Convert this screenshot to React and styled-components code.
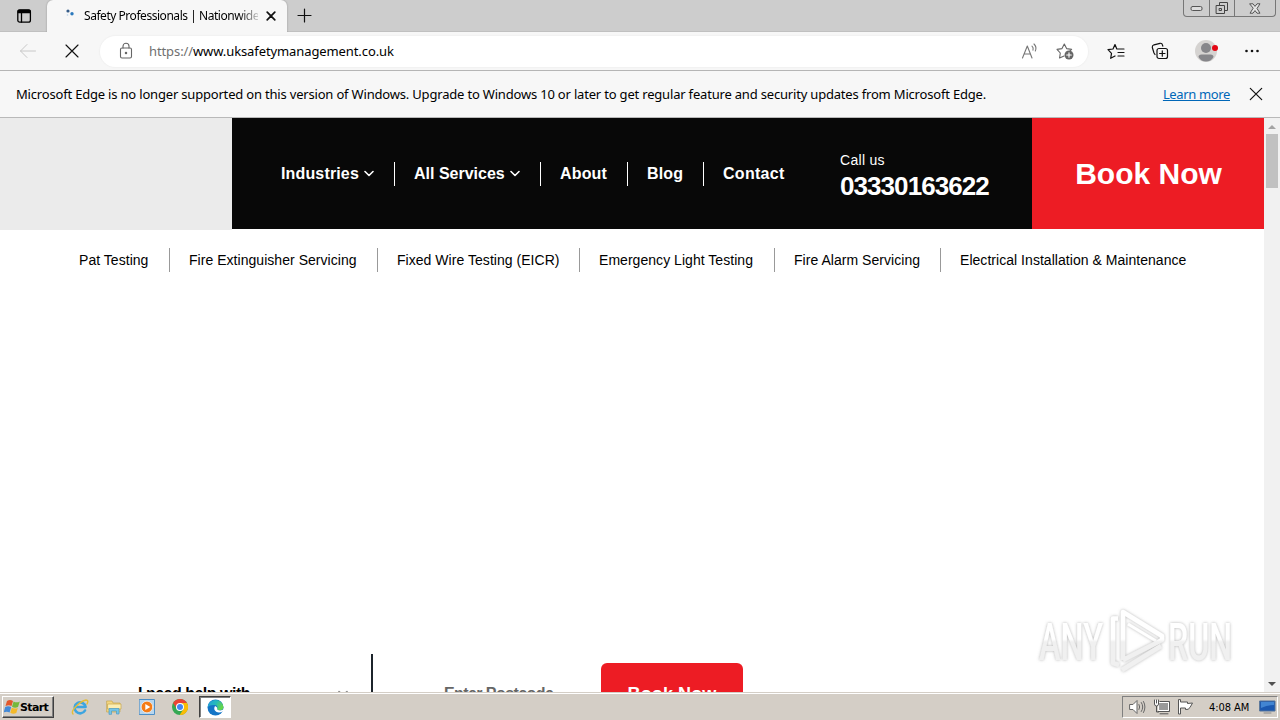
import React from 'react';
import styled, { createGlobalStyle } from 'styled-components';

const GlobalStyle = createGlobalStyle`
  * {
    box-sizing: border-box;
  }

  body {
    margin: 0;
    background: #fff;
    overflow: hidden;
  }

  svg {
    display: block;
    flex: none;
  }
`;

const Screen = styled.div`
  width: 1280px;
  height: 720px;
  display: flex;
  flex-direction: column;
  overflow: hidden;
  font-family: 'Noto Sans', 'Open Sans', sans-serif;
  color: #000;
`;

const TabStrip = styled.div`
  height: 32px;
  flex: none;
  display: flex;
  background: #cdcdcd;
  border-bottom: 1px solid #c0c0c0;
`;

const TabActions = styled.div`
  width: 47px;
  padding: 8px 0 0 16px;
`;

const Tab = styled.div`
  width: 240px;
  height: 32px;
  display: flex;
  align-items: center;
  padding-left: 16px;
  background: #f7f7f7;
  border-radius: 6px 6px 0 0;
  box-shadow: 0 0 2px rgba(0, 0, 0, 0.3);
  clip-path: inset(0 -3px 0 -3px);
`;

const TabTitle = styled.span`
  width: 174px;
  margin-left: 5px;
  overflow: hidden;
  white-space: nowrap;
  font-size: 12px;
  line-height: 20px;
  letter-spacing: -0.46px;
  mask-image: linear-gradient(90deg, #000 155px, transparent 178px);
`;

const TabClose = styled.div`
  margin-left: 8px;
`;

const NewTab = styled.div`
  padding: 8px 0 0 10px;
`;

const WindowControls = styled.div`
  display: flex;
  width: 93px;
  height: 17px;
  margin: 0 4px 0 auto;
  border: 1px solid #777;
  border-top: 0;
  border-radius: 0 0 4px 4px;
`;

const WindowButton = styled.div`
  width: ${({ $width }) => $width}px;
  display: flex;
  align-items: center;
  justify-content: center;
  border-left: ${({ $first }) => ($first ? 0 : '1px solid #777')};
`;

const Toolbar = styled.div`
  height: 39px;
  flex: none;
  display: flex;
  align-items: center;
  padding-left: 19px;
  background: #f7f7f7;
  border-bottom: 1px solid #b5b5b5;
`;

const ToolIcon = styled.div`
  margin-left: ${({ $gap }) => $gap || 0}px;
`;

const AddressBar = styled.div`
  width: 988px;
  height: 31px;
  margin-left: 21px;
  padding-left: 18px;
  display: flex;
  align-items: center;
  background: #fff;
  border-radius: 16px;
  box-shadow: 0 0 1px 1px #f1f1f1;
`;

const Url = styled.span`
  width: 260px;
  margin-left: 15px;
  font-size: 13px;
  letter-spacing: -0.1px;
  white-space: nowrap;
`;

const Scheme = styled.span`
  color: #707070;
`;

const InfoBar = styled.div`
  height: 47px;
  flex: none;
  display: flex;
  align-items: center;
  padding: 0 17px 1px 16px;
  background: #f7f7f7;
  border-bottom: 1px solid #b9b9b9;
  font-size: 13px;
  letter-spacing: -0.187px;
  white-space: nowrap;
`;

const InfoText = styled.span`
  flex: 1;
`;

const LearnMore = styled.a`
  margin-right: 19px;
  color: #0067b8;
  letter-spacing: -0.36px;
  text-decoration: underline;
`;

const Viewport = styled.div`
  height: 574px;
  flex: none;
  display: flex;
`;

const Page = styled.main`
  position: relative;
  width: 1264px;
  display: flex;
  flex-direction: column;
  overflow: hidden;
  background: #fff;
  font-family: 'Liberation Sans', Arial, sans-serif;
`;

const Header = styled.header`
  height: 111px;
  flex: none;
  display: flex;
`;

const LogoArea = styled.div`
  width: 232px;
  height: 112px;
  background: #ebebeb;
`;

const MainNav = styled.nav`
  width: 608px;
  display: flex;
  align-items: center;
  padding-left: 30px;
  background: #080808;
`;

const NavItem = styled.a`
  width: ${({ $width }) => $width}px;
  height: 24px;
  display: flex;
  align-items: center;
  gap: 5px;
  padding-left: 19px;
  border-right: ${({ $last }) => ($last ? 0 : '1px solid #fff')};
  color: #fff;
  font-size: 16px;
  font-weight: bold;
  letter-spacing: ${({ $spacing = 0.15 }) => $spacing}px;
  white-space: nowrap;
`;

const CallUs = styled.div`
  width: 192px;
  padding-top: 33px;
  background: #080808;
  color: #fff;
`;

const CallLabel = styled.div`
  font-size: 14px;
  line-height: 18px;
  letter-spacing: 0.3px;
`;

const CallNumber = styled.div`
  font-size: 26px;
  font-weight: bold;
  line-height: 34px;
  letter-spacing: -0.93px;
`;

const BookNow = styled.a`
  flex: 1;
  display: flex;
  align-items: center;
  justify-content: center;
  padding-left: 1px;
  background: #ed1c24;
  color: #fff;
  font-size: 30px;
  font-weight: bold;
`;

const ServiceNav = styled.nav`
  display: flex;
  padding: 19px 0 0 60px;
`;

const ServiceItem = styled.a`
  width: ${({ $width }) => $width}px;
  height: 24px;
  padding-left: 19px;
  border-right: ${({ $last }) => ($last ? 0 : '1px solid #999')};
  font-size: 14px;
  line-height: 24px;
  letter-spacing: 0.04px;
  white-space: nowrap;
`;

const BookingForm = styled.div`
  height: 38px;
  margin-top: auto;
  display: flex;
  overflow: hidden;
`;

const HelpSelect = styled.div`
  width: 373px;
  height: 70px;
  display: flex;
  padding: 30px 23px 0 138px;
  justify-content: space-between;
  border-right: 2px solid #1c242b;
  font-size: 16px;
  font-weight: bold;
  line-height: 20px;
  letter-spacing: -0.5px;
  white-space: nowrap;
`;

const SelectArrow = styled.span`
  padding-top: 6px;
`;

const Postcode = styled.div`
  width: 228px;
  padding: 30px 0 0 71px;
  color: #666;
  font-size: 16px;
  font-weight: bold;
  line-height: 20px;
  letter-spacing: -0.58px;
  white-space: nowrap;
`;

const SubmitButton = styled.div`
  width: 142px;
  height: 60px;
  margin-top: 9px;
  padding-top: 20px;
  border-radius: 6px;
  background: #ed1c24;
  color: #fff;
  font-size: 18px;
  font-weight: bold;
  line-height: 22px;
  letter-spacing: 0.1px;
  text-align: center;
`;

const Watermark = styled.div`
  position: absolute;
  right: 20px;
  bottom: 14px;
`;

const Scrollbar = styled.div`
  width: 16px;
  display: flex;
  flex-direction: column;
  align-items: center;
  justify-content: space-between;
  background: #f1f1f1;
`;

const ScrollTop = styled.div`
  display: flex;
  flex-direction: column;
  align-items: center;
`;

const ScrollButton = styled.div`
  height: 16px;
  display: flex;
  align-items: center;
`;

const ScrollThumb = styled.div`
  width: 12px;
  height: 54px;
  background: #c1c1c1;
`;

const Taskbar = styled.footer`
  height: 28px;
  flex: none;
  display: flex;
  align-items: center;
  padding: 1px 2px 0;
  background: #d4cec6;
  border-top: 1px solid #d4cec6;
  box-shadow: inset 0 1px 0 #fff;
`;

const StartButton = styled.div`
  width: 52px;
  height: 22px;
  display: flex;
  align-items: center;
  padding-left: 1px;
  border: 1px solid;
  border-color: #fff #404040 #404040 #fff;
  box-shadow: inset -1px -1px 0 #808080;
  font-family: 'DejaVu Sans', sans-serif;
  font-size: 11px;
  font-weight: bold;
  letter-spacing: -0.65px;
`;

const QuickLaunch = styled.div`
  display: flex;
  align-items: center;
  gap: 17px;
  margin-left: 17px;
`;

const ActiveTask = styled.div`
  width: 32px;
  height: 22px;
  margin-left: 11px;
  display: flex;
  align-items: center;
  justify-content: center;
  background: #fff;
  border: 1px solid;
  border-color: #404040 #fff #fff #404040;
  box-shadow: inset 1px 1px 0 #808080;
`;

const Tray = styled.div`
  width: 156px;
  height: 22px;
  margin-left: auto;
  display: flex;
  align-items: center;
  padding-left: 6px;
  border: 1px solid;
  border-color: #808080 #fff #fff #808080;
`;

const TrayIcons = styled.div`
  display: flex;
  gap: 7px;
`;

const Clock = styled.span`
  width: 49px;
  margin-left: 15px;
  font-family: 'DejaVu Sans Condensed', 'DejaVu Sans', sans-serif;
  font-size: 11px;
  letter-spacing: -0.05px;
  white-space: nowrap;
`;

const navItems = [
  { label: 'Industries', width: 133, menu: true },
  { label: 'All Services', width: 146, menu: true, spacing: 0 },
  { label: 'About', width: 87 },
  { label: 'Blog', width: 76 },
  { label: 'Contact', width: 100, spacing: 0.28 },
];

const services = [
  { label: 'Pat Testing', width: 110 },
  { label: 'Fire Extinguisher Servicing', width: 208 },
  { label: 'Fixed Wire Testing (EICR)', width: 202 },
  { label: 'Emergency Light Testing', width: 195 },
  { label: 'Fire Alarm Servicing', width: 166 },
  { label: 'Electrical Installation & Maintenance', width: 250 },
];

function Icon({ w = 16, h = w, box, color = '#111', stroke = 1, children }) {
  return (
    <svg
      width={w}
      height={h}
      viewBox={box || `0 0 ${w} ${h}`}
      fill="none"
      stroke={color}
      strokeWidth={stroke}
      strokeLinecap="round"
      strokeLinejoin="round"
    >
      {children}
    </svg>
  );
}

function Chevron({ color = '#fff' }) {
  return (
    <Icon w={10} h={7} color={color} stroke={1.6}>
      <path d="M1 1.5l4 4 4-4" />
    </Icon>
  );
}

function BrowserTabs() {
  return (
    <TabStrip>
      <TabActions>
        <Icon w={16} color="#000" stroke={1.3}>
          <rect x="1.8" y="1.8" width="12.6" height="12.4" rx="2" />
          <path d="M5.5 5v9" />
          <path d="M2.3 2.3h11.6v2.2H2.3z" fill="#000" />
        </Icon>
      </TabActions>
      <Tab>
        <Icon w={16} stroke={0}>
          <circle cx="5" cy="3" r="1.6" fill="#345b88" />
          <circle cx="9" cy="5.8" r="1.7" fill="#2b79bd" />
          <circle cx="4.5" cy="7" r="0.8" fill="#b8d3e8" />
        </Icon>
        <TabTitle>Safety Professionals | Nationwide</TabTitle>
        <TabClose>
          <Icon w={10} stroke={1.7}>
            <path d="M1.2 1.2l7.6 7.6M8.8 1.2l-7.6 7.6" />
          </Icon>
        </TabClose>
      </Tab>
      <NewTab>
        <Icon w={15} stroke={1.2}>
          <path d="M7.5 1v13M1 7.5h13" />
        </Icon>
      </NewTab>
      <WindowControls>
        <WindowButton $width={25} $first>
          <Icon w={13} h={6} color="#555">
            <rect x="1" y="1.5" width="11" height="4" rx="1.5" fill="#ddd" />
          </Icon>
        </WindowButton>
        <WindowButton $width={25}>
          <Icon w={14} h={14} color="#444">
            <path d="M4.5 4V1.5h8v8H10" />
            <rect x="1.5" y="4.5" width="8" height="8" />
            <rect x="4.5" y="7.5" width="2" height="2" />
          </Icon>
        </WindowButton>
        <WindowButton $width={41}>
          <Icon w={12} h={11} color="#555">
            <path d="M1 .8h3l2 2.6 2-2.6h3L8 5.5l3 4.7H8L6 7.6l-2 2.6H1l3-4.7z" fill="#e5e5e5" />
          </Icon>
        </WindowButton>
      </WindowControls>
    </TabStrip>
  );
}

function BrowserToolbar() {
  return (
    <Toolbar>
      <ToolIcon>
        <Icon w={18} h={16} color="#c8c8c8">
          <path d="M16.5 8h-15M8 1.5L1.5 8 8 14.5" />
        </Icon>
      </ToolIcon>
      <ToolIcon $gap={28}>
        <Icon w={14} stroke={1.15}>
          <path d="M1 1l12 12M13 1L1 13" />
        </Icon>
      </ToolIcon>
      <AddressBar>
        <Icon w={16} h={18} color="#666" stroke={1.1}>
          <rect x="2.5" y="6" width="11" height="10" rx="1.5" />
          <path d="M5 6V4.3a3 3 0 0 1 6 0V6" />
          <circle cx="8" cy="11" r=".7" fill="#666" />
        </Icon>
        <Url>
          <Scheme>https://</Scheme>www.uksafetymanagement.co.uk
        </Url>
        <ToolIcon $gap={612}>
          <Icon w={18} h={17} color="#777" stroke={1.1}>
            <path d="M1.5 15L6.3 3 11 15M3.2 11h6.2M11 3.2c1.2 1 1.4 2.6 1 4M13 1c2 2 2.4 4.6 1.3 7" />
          </Icon>
        </ToolIcon>
        <ToolIcon $gap={17}>
          <Icon w={19} h={18} color="#666" stroke={1.1}>
            <path d="M8 14l-4.4 2 .7-5L1 7.4l5-.8L8.3 2l2.3 4.6 5 .8-2 2" />
            <circle cx="13" cy="13" r="4.5" fill="#666" stroke="none" />
            <path d="M13 10.7v4.6M10.7 13h4.6" stroke="#fff" />
          </Icon>
        </ToolIcon>
      </AddressBar>
      <ToolIcon $gap={19}>
        <Icon w={18} h={17} stroke={1.2}>
          <path d="M9.8 6L8 1.5 6 6l-5 .7 3.5 3.6-.8 5L8 13M9.8 6H17M11 9.5h6M11 13h6" />
        </Icon>
      </ToolIcon>
      <ToolIcon $gap={26}>
        <Icon w={18} h={18} stroke={1.2}>
          <rect x="6" y="6.5" width="10.5" height="10" rx="2" />
          <path d="M11.3 8.8v5.4M8.6 11.5H14M4 12.5L3 11 1.3 5.5Q1 3.5 3 2.8L9 1.3q2-.4 2.5 1.8l.3 1" />
        </Icon>
      </ToolIcon>
      <ToolIcon $gap={25}>
        <Icon w={24} h={24} stroke={0}>
          <circle cx="12" cy="12" r="11" fill="#d5d3d1" />
          <circle cx="12" cy="9" r="5" fill="#86868a" />
          <path d="M4.5 18q0-2.5 3-2.5h9q3 0 3 2.5-2.5 4.5-7.5 4.5T4.5 18z" fill="#86868a" />
          <circle cx="21" cy="9" r="3" fill="#e30613" />
        </Icon>
      </ToolIcon>
      <ToolIcon $gap={26}>
        <Icon w={16} h={4} stroke={0}>
          <circle cx="2.5" cy="2" r="1.3" fill="#111" />
          <circle cx="8" cy="2" r="1.3" fill="#111" />
          <circle cx="13.5" cy="2" r="1.3" fill="#111" />
        </Icon>
      </ToolIcon>
    </Toolbar>
  );
}

function AnyRunLogo() {
  return (
    <svg width="208" height="72" viewBox="0 0 208 72">
      <defs>
        <filter id="soft" x="-10%" y="-10%" width="120%" height="120%">
          <feDropShadow dx="0" dy="0" stdDeviation="1.5" floodColor="#888" floodOpacity="0.65" />
        </filter>
        <linearGradient id="fade" gradientUnits="userSpaceOnUse" x1="0" y1="0" x2="0" y2="72">
          <stop offset="46%" stopColor="#fff" />
          <stop offset="50%" stopColor="#f0f0f0" />
        </linearGradient>
      </defs>
      <g
        filter="url(#soft)"
        fill="url(#fade)"
        fontFamily="Roboto, 'Liberation Sans', sans-serif"
        fontSize="51"
        fontWeight="500"
      >
        <text x="3" y="54" textLength="64" lengthAdjust="spacingAndGlyphs">ANY</text>
        <text x="132" y="54" textLength="64" lengthAdjust="spacingAndGlyphs">RUN</text>
        <g fill="none" stroke="url(#fade)" strokeWidth="4.5" strokeLinejoin="round">
          <path d="M82 12.5h-5V57l6 2" />
          <path d="M87 54V6L126 30v4L87 54" />
          <path d="M86 64L125 40" />
          <path d="M92 18l28 17" strokeWidth="3" />
        </g>
      </g>
    </svg>
  );
}

function Website() {
  return (
    <Page>
      <Header>
        <LogoArea />
        <MainNav>
          {navItems.map((item, index) => (
            <NavItem
              key={item.label}
              $width={item.width}
              $spacing={item.spacing}
              $last={index === navItems.length - 1}
            >
              {item.label}
              {item.menu && <Chevron />}
            </NavItem>
          ))}
        </MainNav>
        <CallUs>
          <CallLabel>Call us</CallLabel>
          <CallNumber>03330163622</CallNumber>
        </CallUs>
        <BookNow>Book Now</BookNow>
      </Header>
      <ServiceNav>
        {services.map((item, index) => (
          <ServiceItem key={item.label} $width={item.width} $last={index === services.length - 1}>
            {item.label}
          </ServiceItem>
        ))}
      </ServiceNav>
      <BookingForm>
        <HelpSelect>
          I need help with
          <SelectArrow>
            <Chevron color="#888" />
          </SelectArrow>
        </HelpSelect>
        <Postcode>Enter Postcode</Postcode>
        <SubmitButton>Book Now</SubmitButton>
      </BookingForm>
      <Watermark>
        <AnyRunLogo />
      </Watermark>
    </Page>
  );
}

function TaskIcons() {
  return (
    <QuickLaunch>
      <Icon w={18} h={18} stroke={2.6} color="#3da5e0">
        <path d="M14 12.5a5.5 5.5 0 1 1 .6-3.5H5" />
        <path d="M2 16C-1 13 9 3 15 2q3 0 1 4" stroke="#e5bd36" strokeWidth="1.4" />
      </Icon>
      <Icon w={16} h={16} color="#c9a64c" stroke={0.7}>
        <path d="M1 2h5l1 2h7v9H1z" fill="#f3d681" />
        <path d="M2 5h13v5H2z" fill="#fbedb2" />
        <path d="M3 15V9.5h10V15h-2.5v-3h-5v3z" fill="#75c5e8" stroke="#4b9cc5" />
      </Icon>
      <Icon w={16} h={16} color="#4c8fc8">
        <rect x="0.5" y="0.5" width="15" height="15" fill="#b7d6ee" />
        <circle cx="8" cy="8" r="5.8" fill="#f57c16" stroke="#fff" strokeWidth=".6" />
        <path d="M6.3 5l5 3-5 3z" fill="#fff" stroke="none" />
      </Icon>
      <Icon w={16} h={16} stroke={0}>
        <circle cx="8" cy="8" r="8" fill="#34a853" />
        <path d="M1.1 4A8 8 0 0 1 15 4H8L5 10z" fill="#ea4335" />
        <path d="M15 4a8 8 0 0 1-7.3 12L11.5 10V6L8 4z" fill="#fbbc05" />
        <circle cx="8" cy="8" r="4" fill="#fff" />
        <circle cx="8" cy="8" r="3" fill="#4285f4" />
      </Icon>
    </QuickLaunch>
  );
}

function DesktopTaskbar() {
  return (
    <Taskbar>
      <StartButton>
        <Icon w={16} h={16} stroke={0}>
          <path d="M3 2q3-2 6 0L7.5 7Q5 5.5 1.5 7z" fill="#e2572b" />
          <path d="M9.6 2.4q3 1.8 6.2 0L14 8q-3 1.5-6-.2z" fill="#75b83b" />
          <path d="M1.2 8q3-1.5 6 0L5.6 13.5q-3-1.5-6 0z" fill="#4389d7" />
          <path d="M7.8 8.8q3 1.5 6 .1L12.3 14q-3 1.5-6-.2z" fill="#f4b92a" />
        </Icon>
        Start
      </StartButton>
      <TaskIcons />
      <ActiveTask>
        <svg width="17" height="17" viewBox="0 0 17 17">
          <defs>
            <linearGradient id="edge" x1="0" y1="0" x2="1" y2="0.4">
              <stop offset="0" stopColor="#239de0" />
              <stop offset="0.55" stopColor="#25b9bb" />
              <stop offset="1" stopColor="#64d64b" />
            </linearGradient>
          </defs>
          <circle cx="8.5" cy="8.5" r="8" fill="#1475c7" />
          <path d="M.6 8A8 8 0 0 1 16.5 8c0 4-5.5 4-6.5 2 1-2 .2-4-2.5-4Q3 5.5.6 8z" fill="url(#edge)" />
          <path d="M8 7q-2 3.4 1.2 5.8 3 1.5 6.5-.3l1.3-2.2q-4 2.2-7-.1 1-2-2-3.2z" fill="#fff" />
        </svg>
      </ActiveTask>
      <Tray>
        <TrayIcons>
          <Icon w={17} h={16} color="#666">
            <path d="M1 5.5h3l4-4v13l-4-4H1z" fill="#fff" />
            <path d="M10 5.5q1.5 2.5 0 5M12.3 3.5q3 4.5 0 9M14.5 2.5q3 5.5 0 11" />
          </Icon>
          <Icon w={17} h={16} color="#555">
            <rect x="6" y="3.5" width="9.5" height="8" fill="#999" stroke="#fff" />
            <path d="M5 12.5h11.5V2.5H7M7 14.8h8M3.5 7v6h2" />
            <path d="M1.5 1v4q0 2 2 2t2-2V1M3.5 1v3" fill="#fff" />
          </Icon>
          <Icon w={17} h={16} color="#555">
            <path d="M1.5 1v14h2V9h5v1.5q3 .5 4.5-2L15.5 4l-5 .5V3h-7V1z" fill="#fff" />
          </Icon>
        </TrayIcons>
        <Clock>4:08 AM</Clock>
        <ToolIcon $gap={1}>
          <Icon w={17} h={16} color="#527198">
            <rect x="1" y="2" width="15" height="10" fill="#1b58b0" />
            <path d="M2 3h13v3Q8 6 2 9z" fill="#4285d2" stroke="none" />
            <path d="M5 14h7" stroke="#888" />
          </Icon>
        </ToolIcon>
      </Tray>
    </Taskbar>
  );
}

function App() {
  return (
    <Screen>
      <GlobalStyle />
      <BrowserTabs />
      <BrowserToolbar />
      <InfoBar>
        <InfoText>
          Microsoft Edge is no longer supported on this version of Windows. Upgrade to Windows 10 or later to get
          regular feature and security updates from Microsoft Edge.
        </InfoText>
        <LearnMore>Learn more</LearnMore>
        <Icon w={14} stroke={1.2}>
          <path d="M1.3 1.3l11.4 11.4M12.7 1.3L1.3 12.7" />
        </Icon>
      </InfoBar>
      <Viewport>
        <Website />
        <Scrollbar>
          <ScrollTop>
            <ScrollButton>
              <Icon w={8} h={5} stroke={0}>
                <path d="M0 5l4-4 4 4z" fill="#a3a3a3" />
              </Icon>
            </ScrollButton>
            <ScrollThumb />
          </ScrollTop>
          <ScrollButton>
            <Icon w={8} h={5} stroke={0}>
              <path d="M0 0h8L4 4z" fill="#505050" />
            </Icon>
          </ScrollButton>
        </Scrollbar>
      </Viewport>
      <DesktopTaskbar />
    </Screen>
  );
}

export default App;
